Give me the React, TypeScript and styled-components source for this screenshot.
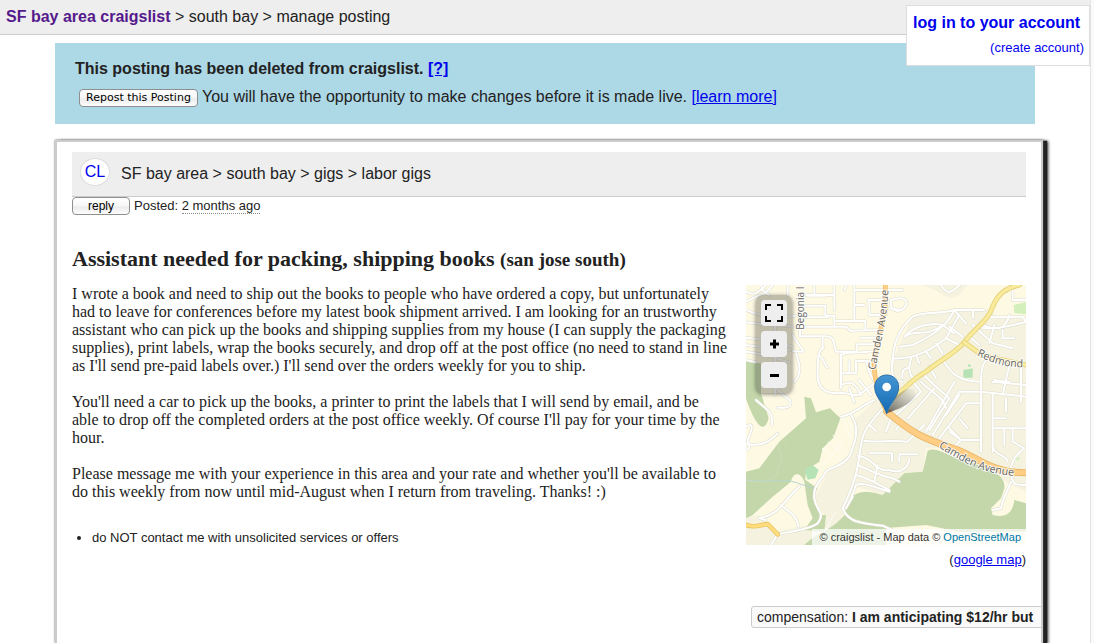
import React from "react";
import styled, { createGlobalStyle } from "styled-components";

const GlobalStyle = createGlobalStyle`
  * { box-sizing: border-box; }
  body {
    margin: 0;
    background: #fff;
    color: #222;
    font: 16px/20px "Liberation Sans", Arial, sans-serif;
  }
  h1, h2, p, ul { margin: 0; }
  a { color: #00e; }
`;

const Shell = styled.div`
  display: flex;
  min-height: 100vh;
  position: relative;
`;

const Page = styled.div`
  flex: 1;
  min-width: 0;
  display: flex;
  flex-direction: column;
`;

const Gutter = styled.div`
  width: 4px;
  background: #fafafa;
  border-left: 1px solid #e3e3e3;
`;

const TopBar = styled.header`
  height: 35px;
  padding: 7px 6px 0;
  background: #eee;
  border-bottom: 1px solid #ccc;
`;

const HomeLink = styled.a`
  color: #551a8b;
  font-weight: bold;
  text-decoration: none;
`;

const AccountBox = styled.nav`
  position: absolute;
  top: 5px;
  right: 4px;
  width: 184px;
  height: 61px;
  padding: 7px 5px 0;
  display: flex;
  flex-direction: column;
  gap: 5px;
  background: #fff;
  border: 1px solid #ddd;
`;

const LoginLink = styled.a`
  padding-left: 1px;
  font-weight: bold;
  text-decoration: none;
  white-space: nowrap;
`;

const CreateLink = styled.a`
  align-self: flex-end;
  font-size: 13px;
  text-decoration: none;
`;

const Banner = styled.section`
  margin: 8px 55px 0;
  height: 81px;
  padding: 16px 20px 0;
  background: #add8e6;
`;

const BannerTitle = styled.h1`
  font-size: 16px;
  line-height: 20px;
`;

const BannerRow = styled.div`
  display: flex;
  align-items: center;
  gap: 4px;
  margin: 8px 0 0 4px;
`;

const MacButton = styled.button<{ $width: number; $family: string }>`
  width: ${(p) => p.$width}px;
  height: 18px;
  padding: 0;
  font: 11px/14px ${(p) => p.$family};
  color: #000;
  white-space: nowrap;
  border: 1px solid #8f8f8f;
  border-radius: 4px;
  background: linear-gradient(#fff 0%, #f6f6f6 50%, #ebebeb 55%, #fdfdfd 100%);
`;

const RepostButton = styled(MacButton)`
  margin-top: 2px;
`;

const Card = styled.main`
  flex: 1;
  margin: 16px 47px 0 55px;
  padding: 10px 15px 15px;
  border: 2px solid #ccc;
  border-bottom: 0;
  overflow: hidden;
  background: #fff;
  box-shadow: 0 0 2px #555, 4px 1px 1px #222, 5px 1px 3px #222;
`;

const Crumbs = styled.nav`
  display: flex;
  align-items: center;
  gap: 11px;
  height: 45px;
  padding: 0 8px;
  background: #eee;
  border-bottom: 1px solid #ccc;
`;

const Logo = styled.a`
  display: flex;
  align-items: center;
  justify-content: center;
  width: 30px;
  height: 28px;
  margin-top: -4px;
  background: #fff;
  border: 1px solid #ddd;
  border-radius: 50%;
  text-decoration: none;
`;

const PostedRow = styled.div`
  display: flex;
  gap: 4px;
  height: 48px;
  font-size: 13px;
  line-height: 18px;
`;

const ReplyButton = styled(MacButton)`
  font-size: 12px;
`;

const Age = styled.time`
  border-bottom: 1px dotted #888;
`;

const Title = styled.h2`
  font: bold 22px/28px "Liberation Serif", "Times New Roman", serif;
`;

const Place = styled.small`
  font-size: 19px;
`;

const Columns = styled.div`
  display: flex;
  gap: 18px;
  margin-top: 11px;
`;

const Body = styled.article`
  flex: 1;
  min-width: 0;
  font: 16px/18px "Liberation Serif", "Times New Roman", serif;
`;

const Paragraph = styled.p`
  margin-bottom: 18px;
`;

const Notices = styled.ul`
  margin-top: 28px;
  padding-left: 20px;
  font: 13px/18px "Liberation Sans", Arial, sans-serif;
`;

const Side = styled.aside`
  width: 280px;
  flex: none;
`;

const MapFrame = styled.div`
  position: relative;
  height: 260px;
  overflow: hidden;
  background: #fdf9e3;
`;

const MapDrawing = styled.svg`
  display: block;
  width: 100%;
  height: 100%;
`;

const MapTools = styled.div`
  position: absolute;
  left: 10px;
  top: 10px;
  display: flex;
  flex-direction: column;
  gap: 5px;
  padding: 5px;
  border-radius: 7px;
  background: rgba(80, 80, 70, 0.36);
  box-shadow: 0 1px 4px rgba(0, 0, 0, 0.5);
`;

const MapTool = styled.button`
  display: flex;
  align-items: center;
  justify-content: center;
  width: 26px;
  height: 26px;
  padding: 0;
  border: 0;
  border-radius: 4px;
  background: #eee;
  color: #000;
`;

const Attribution = styled.div`
  position: absolute;
  right: 0;
  bottom: 0;
  padding: 0 5px 0 8px;
  font-size: 11px;
  line-height: 16px;
  color: #333;
  white-space: nowrap;
  background: rgba(255, 255, 255, 0.7);

  a {
    color: #0078a8;
    text-decoration: none;
  }
`;

const MapLink = styled.p`
  margin-top: 5px;
  font-size: 13px;
  line-height: 20px;
  text-align: right;
`;

const Compensation = styled.p`
  width: 320px;
  margin: 36px 0 0 5px;
  height: 22px;
  padding: 0 5px;
  font-size: 14px;
  line-height: 20px;
  white-space: nowrap;
  background: #fafafa;
  border: 1px solid #ccc;
  border-radius: 3px;
`;

const streets = [
  "M0 20C25 35 40 20 60 0M0 50C45 25 60 30 80 0M45 0C50 20 58 25 70 30",
  "M0 75C40 95 100 100 150 92M0 112C40 120 80 118 140 125M0 158C40 162 80 165 140 185",
  "M0 180C40 188 80 185 130 195M0 200C40 205 90 218 130 232M0 225L30 232",
  "M87 120V330M87 300C95 320 110 330 125 340C140 350 135 368 115 368H95",
  "M140 150C165 195 180 200 165 200L140 198M150 205C160 235 170 265 145 290",
  "M125 0V30M205 0V28M265 0V75M265 30H180M178 62H238V92H265V125",
  "M325 0V108M325 15H470M295 15C300 5 300 0 300 0M325 60H355M185 32H238",
  "M162 125H300L312 137L400 135M270 108H358V132M162 97H245M162 97V154H240C265 154 262 170 270 200H332",
  "M332 202V178H385M345 158H400M285 208V310M290 208C300 200 340 205 385 198",
  "M230 154V188M232 188C215 200 215 220 215 270C215 310 240 325 275 325C310 320 330 340 345 325L385 295",
  "M217 212C235 215 235 245 245 248M285 265H330V228H370M310 228V265M285 300C310 290 325 285 345 330",
  "M338 284L375 330M310 310L325 352M360 228C370 270 380 280 385 290",
  "M365 45H420V90H370V45M435 45C480 30 490 50 475 68C450 90 430 70 435 45M430 70L465 75",
  "M585 0C600 25 610 30 640 0",
  "M440 235C440 180 460 130 500 95C540 75 580 90 625 75H715M625 75C600 130 550 155 500 180L460 185",
  "M475 155C500 125 560 110 590 120M590 120C540 160 510 130 475 155M440 220C500 225 550 200 600 160L640 90",
  "M625 75L660 115M610 125L650 155M590 120L625 145M600 160L640 180M570 175L590 205M540 200L555 220M512 215L520 235",
  "M440 220C430 280 450 290 470 290M500 280C480 250 495 230 495 220M470 280C465 250 480 250 490 248",
  "M680 75L682 100M730 95C750 100 770 95 830 95L840 110M700 125C720 135 770 130 840 110M800 0V45H840",
  "M680 120L740 175L800 190M670 155L700 180M730 175L745 120M770 135V160H805M700 115C750 140 780 135 790 90",
  "M730 220C700 230 705 290 705 330V500M745 285C775 290 790 290 790 290M825 235V350M790 240L770 330",
  "M590 225C620 270 640 290 705 290M550 245L570 280M535 270C560 300 585 315 610 340L550 435M500 290L525 320L440 400",
  "M565 310L485 400M525 290C550 320 590 330 600 370M625 290L540 440M705 320H640L560 450M705 355H660L580 460",
  "M705 320L840 335M740 325V500M740 400H780M740 430H840M775 430V480M640 400L665 430M610 430L640 460",
  "M705 465H645L620 490M645 465L610 440M740 485C745 510 780 510 785 530M800 430V470L835 490C805 510 800 530 790 560C805 600 800 600 840 600",
  "M795 590C780 630 770 640 765 670L740 675M740 290L840 300M780 340V380M640 330L600 390",
  "M385 345C350 360 320 390 285 395M315 390C345 430 325 480 310 515C285 550 250 545 240 560C225 590 200 600 205 640C210 680 240 680 215 715C190 735 130 740 95 748L75 780",
  "M410 370C370 415 350 440 345 480C335 550 330 590 290 670C305 710 340 715 410 722L450 740",
  "M355 468C400 472 440 465 485 470C500 450 520 435 535 420M435 400L420 440M465 410L450 435M370 420L390 438",
  "M335 512C390 520 380 560 430 555C470 570 490 540 490 520M370 505H438V530M460 530V508H515",
  "M395 540L385 590M335 540C380 560 410 575 440 580L460 590M330 570C370 580 380 590 430 615M330 600C350 590 380 605 430 620M330 600L315 640",
  "M300 670L320 635M5 470C20 490 0 495 0 495M0 478C40 482 60 480 95 445M30 345C70 380 80 380 78 420M0 425C25 410 20 430 5 465",
  "M40 700C100 690 110 650 160 605M105 660C140 690 150 690 158 725M40 700L60 705",
];

const CityMap = () => (
  <MapDrawing viewBox="0 0 840 780" role="img" aria-label="Street map around Camden Avenue">
    <defs>
      <linearGradient id="pinFill" x1="0" y1="0" x2="0" y2="1">
        <stop offset="0" stopColor="#4596d2" />
        <stop offset="1" stopColor="#1168b4" />
      </linearGradient>
      <linearGradient id="pinShadow" x1="0" y1="1" x2="1" y2="0">
        <stop offset="0" stopColor="#222" stopOpacity="0.7" />
        <stop offset="1" stopColor="#555" stopOpacity="0" />
      </linearGradient>
      <path id="camdenNorth" d="M388 256C402 180 424 110 428 0" />
      <path id="camdenSouth" d="M577 487C650 530 700 565 815 574" />
      <path id="redmond" d="M692 211C740 235 785 250 840 246" />
      <path id="begonia" d="M175 134V-60" />
    </defs>

    <rect width="840" height="780" fill="#fdf9e3" />
    <g fill="#f5f3df">
      <path d="M440 230L500 90L640 70L730 75L760 100H840V620L760 580L600 490L540 490L530 560L470 570L410 630L330 605L285 670L310 715L410 730V780H190L235 690L205 640L250 555L320 500L330 400L390 345L440 310Z" />
      <path d="M0 695L40 690L90 740L230 710L200 780H0Z" />
      <path d="M530 0H665L640 30C610 45 600 35 575 20Z" />
    </g>
    <g fill="#c3d7aa">
      <path d="M0 230L45 235V325L68 400C60 430 40 455 0 340ZM175 335L195 340L210 382L252 370L283 400L262 458L230 490L220 530L180 555L178 585L215 610L200 640L225 690L240 690L235 740L175 735L200 700L185 660L175 590C165 560 140 560 135 590L80 635L20 690L0 700V560L40 550L100 470L180 400Z" />
      <path d="M545 497C575 480 620 525 675 530C720 555 780 560 775 610L765 640L735 670L740 690C780 700 800 685 805 645L840 655V740H640L540 720L410 730C350 700 310 710 295 680L325 630C355 610 390 625 410 630L475 565L530 560Z" />
      <path d="M175 780C220 735 250 745 305 680L320 710L420 730V780Z" />
    </g>
    <path d="M176 555L200 540L218 555L208 580L185 584Z" fill="#b5e3b5" />
    <path d="M652 255L680 250V278H652Z" fill="#b5e3b5" />
    <circle cx="670" cy="242" r="4" fill="#b5e3b5" />
    <path d="M803 60L840 52V88L805 84ZM810 520L822 516L816 530Z" fill="#d3efbb" />
    <path d="M0 585C80 595 110 575 165 598L210 612" fill="none" stroke="#b8d5cd" strokeWidth="3" />
    <g fill="none" stroke="#dfe5cc" strokeWidth="2" strokeDasharray="3 4">
      <path d="M100 470C90 500 120 510 100 540L90 570C60 600 30 590 0 585M95 440L120 480" />
    </g>
    <g fill="none" stroke="#fff" strokeWidth="3" strokeDasharray="7 4">
      <path d="M228 490L290 530M245 470L300 510M260 450L290 490M290 400L315 460M305 400L328 450M285 470L235 540M270 680L235 740" />
    </g>

    <g fill="none" strokeLinecap="round" strokeLinejoin="round">
      {streets.map((d, i) => <path key={`edge${i}`} d={d} stroke="#dddccd" strokeWidth="9" />)}
      {streets.map((d, i) => <path key={`fill${i}`} d={d} stroke="#fff" strokeWidth="6" />)}
      {[
        "M440 340C480 310 500 280 540 260C590 220 620 210 655 172C685 130 725 110 740 65C755 30 775 10 820 0",
        "M655 172L710 212L840 240",
      ].map((d) => (
        <g key={d}>
          <path d={d} stroke="#e4cf75" strokeWidth="15" />
          <path d={d} stroke="#f9eb9c" strokeWidth="10" />
        </g>
      ))}
      <path d="M0 720C25 730 40 720 65 717L95 748" stroke="#e7c45e" strokeWidth="14" />
      <path d="M0 720C25 730 40 720 65 717L95 748" stroke="#ffdc7c" strokeWidth="9" />
      <path d="M418 0V70L385 220C380 270 395 320 422 380" stroke="#eeb862" strokeWidth="14" />
      <path d="M418 0V70L385 220C380 270 395 320 422 380" stroke="#ffce83" strokeWidth="10" />
      <path d="M422 380C500 445 530 460 620 490C690 510 730 565 840 563" stroke="#e7b565" strokeWidth="21" />
      <path d="M422 380C500 445 530 460 620 490C690 510 730 565 840 563" stroke="#ffcd83" strokeWidth="16" />
    </g>

    <g
      fontFamily='"Open Sans", "Noto Sans", sans-serif'
      fontSize="32"
      fill="#666"
      stroke="#fff"
      strokeWidth="6"
      strokeOpacity="0.8"
      paintOrder="stroke"
    >
      <text><textPath href="#camdenNorth">Camden Avenue</textPath></text>
      <text><textPath href="#camdenSouth">Camden Avenue</textPath></text>
      <text><textPath href="#redmond">Redmond</textPath></text>
      <text fontSize="30"><textPath href="#begonia">Begonia I</textPath></text>
    </g>

    <path d="M422 385L450 335C470 310 505 300 510 325C512 345 470 370 422 385Z" fill="url(#pinShadow)" />
    <path
      d="M422 387C414 355 386 337 386 306C386 285 402 270 422 270C442 270 458 285 458 306C458 337 430 355 422 387Z"
      fill="url(#pinFill)"
      stroke="#2c6ea6"
      strokeWidth="3"
    />
    <circle cx="422" cy="306" r="13" fill="#fff" />
  </MapDrawing>
);

const ToolIcon = ({ d, width }: { d: string; width: number }) => (
  <svg width="18" height="18" viewBox="0 0 18 18" fill="none" stroke="#000" strokeWidth={width} aria-hidden="true">
    <path d={d} />
  </svg>
);

export default function App() {
  return (
    <>
      <GlobalStyle />
      <Shell>
        <Page>
          <TopBar>
            <HomeLink href="#home">SF bay area craigslist</HomeLink> &gt; south bay &gt; manage posting
          </TopBar>
          <Banner>
            <BannerTitle>
              This posting has been deleted from craigslist. <a href="#why">[?]</a>
            </BannerTitle>
            <BannerRow>
              <RepostButton type="button" $width={119} $family='"DejaVu Sans", sans-serif'>
                Repost this Posting
              </RepostButton>
              <span>
                You will have the opportunity to make changes before it is made live. <a href="#learn">[learn more]</a>
              </span>
            </BannerRow>
          </Banner>
          <Card>
            <Crumbs>
              <Logo href="#cl">CL</Logo>
              <span>SF bay area &gt; south bay &gt; gigs &gt; labor gigs</span>
            </Crumbs>
            <PostedRow>
              <ReplyButton type="button" $width={58} $family='"Liberation Sans", sans-serif'>
                reply
              </ReplyButton>
              <span>
                Posted: <Age>2 months ago</Age>
              </span>
            </PostedRow>
            <Title>
              Assistant needed for packing, shipping books <Place>(san jose south)</Place>
            </Title>
            <Columns>
              <Body>
                <Paragraph>
                  I wrote a book and need to ship out the books to people who have ordered a copy, but unfortunately
                  had to leave for conferences before my latest book shipment arrived. I am looking for an trustworthy
                  assistant who can pick up the books and shipping supplies from my house (I can supply the packaging
                  supplies), print labels, wrap the books securely, and drop off at the post office (no need to stand
                  in line as I'll send pre-paid labels over.) I'll send over the orders weekly for you to ship.
                </Paragraph>
                <Paragraph>
                  You'll need a car to pick up the books, a printer to print the labels that I will send by email, and
                  be able to drop off the completed orders at the post office weekly. Of course I'll pay for your time
                  by the hour.
                </Paragraph>
                <Paragraph>
                  Please message me with your experience in this area and your rate and whether you'll be available to
                  do this weekly from now until mid-August when I return from traveling. Thanks! :)
                </Paragraph>
                <Notices>
                  <li>do NOT contact me with unsolicited services or offers</li>
                </Notices>
              </Body>
              <Side>
                <MapFrame>
                  <CityMap />
                  <MapTools>
                    <MapTool type="button" aria-label="Full screen">
                      <ToolIcon width={2} d="M1 6V1H6M12 1H17V6M17 12V17H12M6 17H1V12" />
                    </MapTool>
                    <MapTool type="button" aria-label="Zoom in">
                      <ToolIcon width={3} d="M5 9H14M9.5 4.5V13.5" />
                    </MapTool>
                    <MapTool type="button" aria-label="Zoom out">
                      <ToolIcon width={3} d="M5 9.5H14" />
                    </MapTool>
                  </MapTools>
                  <Attribution>
                    © craigslist - Map data © <a href="#osm">OpenStreetMap</a>
                  </Attribution>
                </MapFrame>
                <MapLink>
                  (<a href="#google">google map</a>)
                </MapLink>
                <Compensation>
                  compensation: <b>I am anticipating $12/hr but</b>
                </Compensation>
              </Side>
            </Columns>
          </Card>
        </Page>
        <Gutter />
        <AccountBox>
          <LoginLink href="#login">log in to your account</LoginLink>
          <CreateLink href="#create">(create account)</CreateLink>
        </AccountBox>
      </Shell>
    </>
  );
}
